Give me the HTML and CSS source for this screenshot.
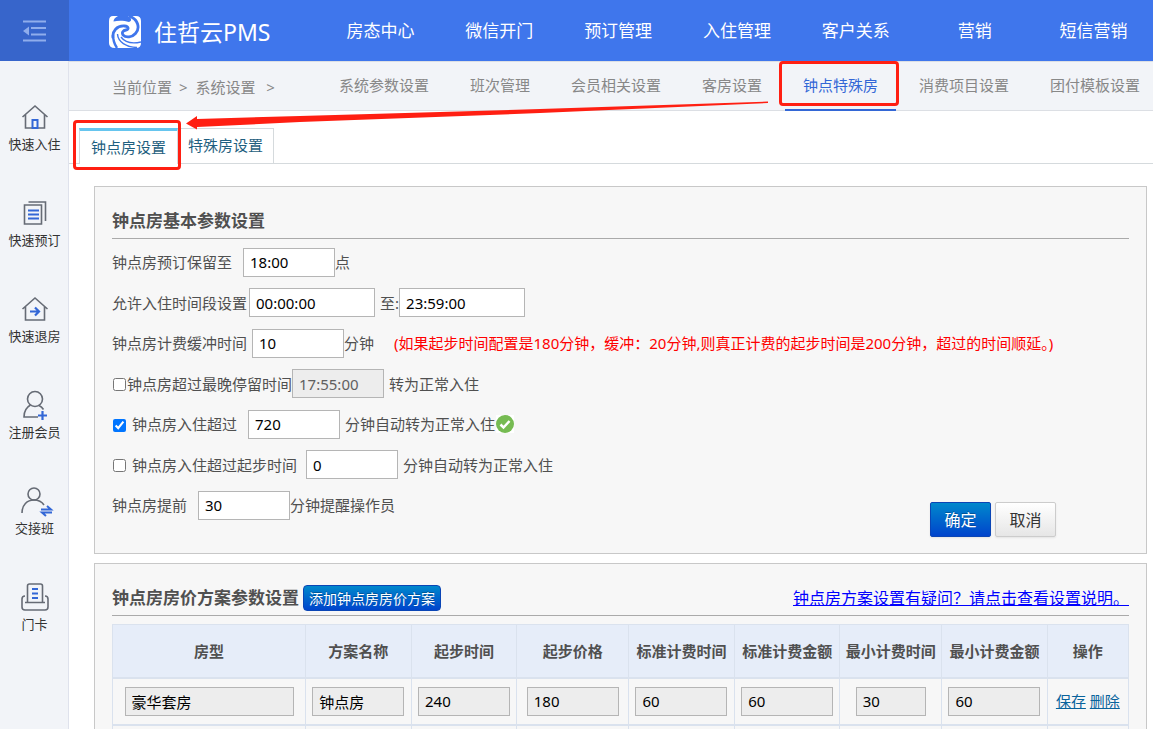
FILE: index.html
```html
<!DOCTYPE html>
<html lang="zh-CN">
<head>
    <meta charset="UTF-8">
    <meta name="viewport" content="width=device-width, initial-scale=1.0">
    <title>住哲云PMS - 钟点房设置</title>
    <link rel="stylesheet" href="styles.css">
</head>
<body>

    <header class="header">
        <button type="button" class="menu-toggle" aria-label="收起菜单">
            <svg width="24" height="22" viewBox="0 0 24 22" fill="none" stroke="#8fadec" stroke-width="2">
                <path d="M0 1.500h23M8 8h15M8 14.500h15M0 20.500h23"/>
                <path d="M0 11l6-4.500v9z" fill="#8fadec" stroke="none"/>
            </svg>
        </button>
        <div class="brand">
            <svg width="32" height="32" viewBox="0 0 32 32" fill="none">
                <path d="M4 0h5C6 1.500 4.500 3.500 4.500 5.500C9 4.500 15 4.500 20 6C23 5 23 2 19 0h8q5 0 5 5v22q0 5-5 5H6q-6 0-6-5V5q0-5 4-5z" fill="#fff"/>
                <path d="M20 0C29 3 31.500 12 26.500 17.500C23 21.500 17 22 14 19C12.500 16.500 14 14.500 17 14C20 13.500 20 10.500 15.500 10C8 9.500 3 15 4 22" stroke="#3f76ec" stroke-width="2.800"/>
                <path d="M4 19C4 25 6 29 8 32" stroke="#3f76ec" stroke-width="2.400"/>
                <path d="M8.500 18C9 26 17 31 28 31.500M12 21C16 26.500 23 28 32 26" stroke="#3f76ec" stroke-width="1.400"/>
            </svg>
            <span>住哲云PMS</span>
        </div>
        <nav class="main-nav">
            <a href="#">房态中心</a>
            <a href="#">微信开门</a>
            <a href="#">预订管理</a>
            <a href="#">入住管理</a>
            <a href="#">客户关系</a>
            <a href="#">营销</a>
            <a href="#">短信营销</a>
        </nav>
    </header>

    <div class="layout">
        <aside class="sidebar">
            <a href="#" class="side-item">
                <svg width="28" height="28" viewBox="0 0 28 28" fill="none" stroke="#666b75" stroke-width="1.600">
                    <path d="M1.500 14L14 3l12.500 11M4.500 11.500V25h19V11.500"/>
                    <path d="M11.500 25v-8h5v8z" stroke="#3367d6" stroke-width="2"/>
                </svg>
                <span>快速入住</span>
            </a>
            <a href="#" class="side-item">
                <svg width="28" height="28" viewBox="0 0 28 28" fill="none" stroke="#666b75" stroke-width="1.600">
                    <path d="M3.500 6h17v19h-17zM7.500 3h17v19"/>
                    <path d="M7 11.500h11M7 15.500h11M7 19.500h11" stroke="#3367d6" stroke-width="2"/>
                </svg>
                <span>快速预订</span>
            </a>
            <a href="#" class="side-item">
                <svg width="28" height="28" viewBox="0 0 28 28" fill="none" stroke="#666b75" stroke-width="1.600">
                    <path d="M1.500 14L14 3l12.500 11M4.500 11.500V25h19V11.500"/>
                    <path d="M9 16.500h9M14 12.500l4 4-4 4" stroke="#3367d6" stroke-width="2.200"/>
                </svg>
                <span>快速退房</span>
            </a>
            <a href="#" class="side-item">
                <svg width="28" height="28" viewBox="0 0 28 28" fill="none" stroke="#666b75" stroke-width="1.600">
                    <circle cx="14" cy="8" r="7.500"/>
                    <path d="M9.500 14C5 16.500 3 20 3 26h14M18 14.500c2 1 3.500 2.500 4.500 4"/>
                    <path d="M21.500 20v9M17 24.500h9" stroke="#3367d6" stroke-width="2.200"/>
                </svg>
                <span>注册会员</span>
            </a>
            <a href="#" class="side-item">
                <svg width="28" height="28" viewBox="0 0 28 28" fill="none" stroke="#666b75" stroke-width="1.600">
                    <circle cx="13" cy="7" r="6"/>
                    <path d="M1 26c0-8 5-13 12-13 5 0 8 2 10 5"/>
                    <path d="M20 22.500h10l-4-3.500M31 25.500H21l4 3.500" stroke="#3367d6" stroke-width="2"/>
                </svg>
                <span>交接班</span>
            </a>
            <a href="#" class="side-item">
                <svg width="28" height="28" viewBox="0 0 28 28" fill="none" stroke="#666b75" stroke-width="1.600">
                    <path d="M6.500 19V3q0-2 2-2h11q2 0 2 2v16M4 19.500h20M4 13q-3 0-3 3v8q0 3 3 3h20q3 0 3-3v-8q0-3-3-3"/>
                    <path d="M11 6h6M11 10.500h6M11 15h6" stroke="#3367d6" stroke-width="1.800"/>
                </svg>
                <span>门卡</span>
            </a>
        </aside>

        <main class="main">
            <div class="subnav">
                <div class="breadcrumb">当前位置 <span>&gt;</span> 系统设置 <span class="last">&gt;</span></div>
                <nav class="subnav-links">
                    <a href="#">系统参数设置</a>
                    <a href="#">班次管理</a>
                    <a href="#">会员相关设置</a>
                    <a href="#">客房设置</a>
                    <a href="#" class="active">钟点特殊房</a>
                    <a href="#">消费项目设置</a>
                    <a href="#">团付模板设置</a>
                </nav>
            </div>

            <div class="tabs">
                <a href="#" class="tab active">钟点房设置</a>
                <a href="#" class="tab">特殊房设置</a>
            </div>

            <!-- Guide arrow from the menu entry to the tab -->
            <svg class="guide-arrow" width="584" height="32" viewBox="0 0 584 32">
                <path d="M0 23.500L11 16v3L114 16 354 9 582 1.500V3L354 13 114 22 11 27v2.500z" fill="#ff1f12"/>
            </svg>

            <section class="panel">
                <h2 class="panel-title">钟点房基本参数设置</h2>
                <form class="settings">
                    <div class="rows">
                        <div class="row">
                            <label for="keep">钟点房预订保留至</label>
                            <input type="text" id="keep" class="field gap-l" value="18:00">
                            <span>点</span>
                        </div>
                        <div class="row">
                            <label for="timeFrom">允许入住时间段设置</label>
                            <input type="text" id="timeFrom" class="field wide gap-xs" value="00:00:00">
                            <label for="timeTo" class="gap-s">至:</label>
                            <input type="text" id="timeTo" class="field wide" value="23:59:00">
                        </div>
                        <div class="row">
                            <label for="buffer">钟点房计费缓冲时间</label>
                            <input type="text" id="buffer" class="field gap-s" value="10">
                            <span>分钟</span>
                            <span class="tip">(如果起步时间配置是180分钟，缓冲：20分钟,则真正计费的起步时间是200分钟，超过的时间顺延。)</span>
                        </div>
                        <div class="row">
                            <input type="checkbox" id="latest">
                            <label for="latest">钟点房超过最晚停留时间</label>
                            <input type="text" class="field" value="17:55:00" aria-label="最晚停留时间" disabled>
                            <span class="gap-s">转为正常入住</span>
                        </div>
                        <div class="row">
                            <input type="checkbox" id="over" checked>
                            <label for="over" class="gap-s">钟点房入住超过</label>
                            <input type="text" class="field gap-l" value="720" aria-label="入住超过分钟">
                            <span class="gap-s">分钟自动转为正常入住</span>
                            <svg class="ok" width="18" height="18" viewBox="0 0 18 18">
                                <path d="M0 0h18v18H0z" fill="#fff"/>
                                <circle cx="9" cy="9" r="9" fill="#76bb52"/>
                                <path d="M4.500 9.500l3 3 6-6.500" fill="none" stroke="#fff" stroke-width="2.500"/>
                            </svg>
                        </div>
                        <div class="row">
                            <input type="checkbox" id="overStart">
                            <label for="overStart" class="gap-s">钟点房入住超过起步时间</label>
                            <input type="text" class="field gap-m" value="0" aria-label="超过起步时间分钟">
                            <span class="gap-s">分钟自动转为正常入住</span>
                        </div>
                        <div class="row">
                            <label for="remind">钟点房提前</label>
                            <input type="text" id="remind" class="field gap-l" value="30">
                            <span>分钟提醒操作员</span>
                        </div>
                    </div>
                    <div class="actions">
                        <button type="submit" class="btn btn-primary">确定</button>
                        <button type="button" class="btn">取消</button>
                    </div>
                </form>
            </section>

            <section class="panel">
                <div class="panel-title">
                    <h2>钟点房房价方案参数设置</h2>
                    <button type="button" class="btn-add">添加钟点房房价方案</button>
                    <a href="#" class="help">钟点房方案设置有疑问？请点击查看设置说明。</a>
                </div>
                <table class="plans">
                    <colgroup>
                        <col class="col-room">
                        <col>
                        <col>
                        <col class="col-price">
                        <col>
                        <col>
                        <col class="col-min">
                        <col>
                        <col class="col-ops">
                    </colgroup>
                    <thead>
                        <tr>
                            <th>房型</th>
                            <th>方案名称</th>
                            <th>起步时间</th>
                            <th>起步价格</th>
                            <th>标准计费时间</th>
                            <th>标准计费金额</th>
                            <th>最小计费时间</th>
                            <th>最小计费金额</th>
                            <th>操作</th>
                        </tr>
                    </thead>
                    <tbody>
                        <tr>
                            <td><input type="text" class="field room" value="豪华套房" aria-label="房型" readonly></td>
                            <td><input type="text" class="field" value="钟点房" aria-label="方案名称" readonly></td>
                            <td><input type="text" class="field" value="240" aria-label="起步时间" readonly></td>
                            <td><input type="text" class="field" value="180" aria-label="起步价格" readonly></td>
                            <td><input type="text" class="field" value="60" aria-label="标准计费时间" readonly></td>
                            <td><input type="text" class="field" value="60" aria-label="标准计费金额" readonly></td>
                            <td><input type="text" class="field short" value="30" aria-label="最小计费时间" readonly></td>
                            <td><input type="text" class="field" value="60" aria-label="最小计费金额" readonly></td>
                            <td class="ops"><a href="#">保存</a> <a href="#">删除</a></td>
                        </tr>
                        <tr>
                            <td></td><td></td><td></td><td></td><td></td><td></td><td></td><td></td><td></td>
                        </tr>
                    </tbody>
                </table>
            </section>
        </main>
    </div>

</body>
</html>
```
FILE: styles.css
```css
* {
    box-sizing: border-box;
}
body {
    margin: 0;
    height: 100vh;
    display: flex;
    flex-direction: column;
    overflow: hidden;
    font-family: "Noto Sans", "Noto Sans CJK SC", sans-serif;
    font-size: 15px;
    line-height: 20px;
    color: #505050;
    background: #fff;
}
a {
    color: inherit;
    text-decoration: none;
}
input, button {
    font-family: inherit;
}

/* Header */
.header {
    display: flex;
    flex: none;
    height: 61px;
    background: #3f76ec;
    color: #fff;
}
.menu-toggle {
    display: flex;
    align-items: center;
    justify-content: center;
    width: 69px;
    padding: 0;
    border: none;
    background: #3765cb;
    cursor: pointer;
}
.brand {
    display: flex;
    align-items: center;
    gap: 13px;
    width: 252px;
    padding: 2px 0 0 40px;
    font-size: 23px;
    line-height: 32px;
    white-space: nowrap;
}
.main-nav {
    flex: 1;
    display: grid;
    grid-template-columns: repeat(7, 1fr);
    align-items: center;
    text-align: center;
    font-size: 17px;
    white-space: nowrap;
}

/* Sidebar */
.layout {
    flex: 1;
    display: flex;
    min-height: 0;
}
.sidebar {
    flex: none;
    display: flex;
    flex-direction: column;
    gap: 45px;
    width: 69px;
    padding: 42px 0 0 1px;
    background: #f2f4f8;
    border-right: 1px solid #dfe2ec;
}
.side-item {
    display: flex;
    flex-direction: column;
    align-items: center;
    gap: 3px;
    font-size: 13px;
    color: #333;
}
.side-item svg {
    overflow: visible;
}

/* Second level menu */
.main {
    flex: 1;
    min-width: 0;
    position: relative;
}
.subnav {
    display: flex;
    height: 50px;
    background: #f2f4f8;
    border-top: 1px solid #dcdfe4;
    border-bottom: 1px solid #dcdfe4;
    color: #888;
    white-space: nowrap;
}
.breadcrumb {
    flex: none;
    width: 252px;
    padding: 15px 0 0 43px;
}
.breadcrumb span {
    margin: 0 4px 0 3px;
}
.breadcrumb .last {
    margin-left: 7px;
}
.subnav-links {
    display: flex;
    gap: 5px;
}
.subnav-links a {
    position: relative;
    height: 49px;
    padding: 13px 18px 0;
}
.subnav-links .active {
    color: #3367d6;
    border-bottom: 2px solid #3367d6;
}

/* Red guide marks */
.subnav-links .active::after,
.tab.active::after {
    content: "";
    position: absolute;
    border: 3px solid #ff1f12;
    border-radius: 4px;
}
.subnav-links .active::after {
    inset: -1px -3px 3px -6px;
}
.tab.active::after {
    inset: -11px -4px -6px -7px;
}
.guide-arrow {
    position: absolute;
    left: 117px;
    top: 39px;
}

/* Tabs */
.tabs {
    display: flex;
    height: 53px;
    padding: 17px 0 0 10px;
    border-bottom: 1px solid #d5dadd;
    color: #1f5f80;
}
.tab {
    height: 35px;
    padding: 6px 10px 0;
    border: 1px solid #d5dadd;
    border-left: none;
    border-bottom: none;
}
.tab.active {
    position: relative;
    height: 36px;
    padding: 6px 11px 0;
    border-left: 1px solid #d5dadd;
    border-top: 3px solid #66c5ee;
    background: #fff;
}

/* Panels */
.panel {
    margin: 22px 6px 0 25px;
    padding: 22px 17px 16px;
    background: #f7f7f7;
    border: 1px solid #c8c8c8;
}
.panel + .panel {
    margin-top: 9px;
}
.panel-title {
    display: flex;
    align-items: center;
    height: 30px;
    margin: 0 0 8px;
    padding-bottom: 5px;
    border-bottom: 1px solid #aaa;
    font-size: 17px;
}
.panel-title h2 {
    margin: 0;
    font-size: 17px;
}
.help {
    margin-left: auto;
    font-size: 16px;
    color: #00f;
    text-decoration: underline;
}

/* Settings form */
.settings {
    display: grid;
    min-height: 290px;
}
.rows {
    grid-area: 1 / 1;
    align-self: start;
    display: flex;
    flex-direction: column;
    justify-content: space-between;
    min-height: 273px;
}
.row {
    display: flex;
    align-items: center;
    height: 30px;
    white-space: nowrap;
}
.row input[type="checkbox"] {
    width: 13px;
    height: 13px;
    margin: 2px 1px 0;
}
.field {
    width: 92px;
    height: 29px;
    padding: 0 6px;
    border: 1px solid #b5b5b5;
    background: #fff;
    font-size: 15px;
    color: #000;
}
.field.wide {
    width: 126px;
}
.field.room {
    width: 169px;
}
.field.short {
    width: 70px;
}
.field:disabled {
    background: #ededed;
    color: #606060;
}
.field:read-only:not(:disabled) {
    background: #ededed;
}
.gap-xs {
    margin-left: 2px;
}
.gap-s {
    margin-left: 5px;
}
.gap-m {
    margin-left: 9px;
}
.gap-l {
    margin-left: 11px;
}
.tip {
    margin-left: 20px;
    color: #f00;
}
.ok {
    margin-left: 1px;
}
.actions {
    grid-area: 1 / 1;
    place-self: end;
    display: flex;
    gap: 4px;
    margin-right: 73px;
}
.btn {
    width: 61px;
    height: 35px;
    padding: 0 0 2px;
    border: 1px solid #ccc;
    border-radius: 2px;
    background: linear-gradient(#fff, #e6e6e6);
    box-shadow: 0 1px 2px rgba(0, 0, 0, 0.08);
    font-size: 16px;
    color: #333;
    cursor: pointer;
}
.btn-primary, .btn-add {
    border: 1px solid #0a45b5;
    background: linear-gradient(#0088cc, #0044cc);
    color: #fff;
    text-shadow: 0 -1px 0 rgba(0, 0, 0, 0.25);
}
.btn-add {
    height: 26px;
    margin-left: 4px;
    padding: 0 5px 1px;
    border-radius: 4px;
    font-size: 14px;
    cursor: pointer;
}

/* Price plans */
.plans {
    width: 100%;
    table-layout: fixed;
    border-collapse: collapse;
}
.plans th, .plans td {
    height: 47px;
    padding: 0;
    border: 1px solid #dae2ee;
    border-bottom-width: 2px;
    text-align: center;
    white-space: nowrap;
}
.plans th {
    height: 53px;
    background: #e6edf9;
}
.col-room {
    width: 19%;
}
.col-price {
    width: 11%;
}
.col-min {
    width: 10%;
}
.col-ops {
    width: 8%;
}
.ops a {
    color: #08639c;
    text-decoration: underline;
}
```
